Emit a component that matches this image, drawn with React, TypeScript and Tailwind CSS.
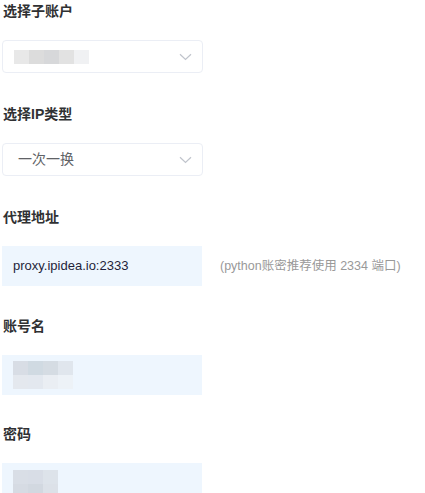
import React from 'react';

const labelClass = "block text-[14px] font-bold leading-[22px] text-[#303133] pl-px";
const fontStack = { fontFamily: '"Liberation Sans", "Noto Sans CJK SC", sans-serif' };

// pixelated placeholder used to mask account data
const Mosaic: React.FC<{ rows: string[][] }> = ({ rows }) => (
  <div className="flex flex-col">
    {rows.map((row, r) => (
      <div key={r} className="flex">
        {row.map((c, i) => (
          <div key={i} className="w-[15px] h-[14px]" style={{ backgroundColor: c }} />
        ))}
      </div>
    ))}
  </div>
);

const Chevron = () => (
  <svg width="13" height="8" viewBox="0 0 13 8" fill="none" className="shrink-0">
    <path d="M1 1.2L6.5 6.5L12 1.2" stroke="#c0c4cc" strokeWidth="1.2" />
  </svg>
);

const App: React.FC = () => {
  return (
    <div className="min-h-screen bg-white px-[2px] text-[#303133]" style={fontStack}>
      <div>
        <label className={labelClass}>选择子账户</label>
        <div className="mt-[18px] w-[201px] h-[33px] border border-[#ebeef5] rounded-[4px] flex items-center justify-between pl-[11px] pr-[10px]">
          <Mosaic rows={[['#e8e8e8', '#dcdcdc', '#d7d8da', '#e2e2e2', '#f0f1f3']]} />
          <Chevron />
        </div>
      </div>

      <div className="mt-[30px]">
        <label className={labelClass}>选择IP类型</label>
        <div className="mt-[18px] w-[201px] h-[33px] border border-[#ebeef5] rounded-[4px] flex items-center justify-between pl-[15px] pr-[10px]">
          <span className="text-[14px] text-[#606266]">一次一换</span>
          <Chevron />
        </div>
      </div>

      <div className="mt-[30px]">
        <label className={labelClass}>代理地址</label>
        <div className="mt-[18px] flex items-center gap-[18px]">
          <div className="w-[200px] h-[40px] bg-[#eef6fe] flex items-center pl-[11px]">
            <span className="text-[13px] text-[#1f1f3a]">proxy.ipidea.io:2333</span>
          </div>
          <span className="text-[12.5px] text-[#999999]">(python账密推荐使用 2334 端口)</span>
        </div>
      </div>

      <div className="mt-[29px]">
        <label className={labelClass}>账号名</label>
        <div className="mt-[18px] w-[200px] h-[40px] bg-[#eef6fe] flex items-center pl-[11px]">
          <Mosaic rows={[['#d8dde5', '#d0dae2', '#d5dce3', '#e0e6ed'], ['#e4e8ee', '#e3e8ef', '#eaeef3', '#edf2f7']]} />
        </div>
      </div>

      <div className="mt-[28px]">
        <label className={labelClass}>密码</label>
        <div className="mt-[18px] w-[200px] h-[40px] bg-[#eef6fe] flex items-start pl-[11px] pt-[7px]">
          <Mosaic rows={[['#d9dee6', '#d8dde6', '#dde3ea'], ['#d6dbe3', '#d2d8e0', '#dce1e8']]} />
        </div>
      </div>
    </div>
  );
};

export default App;
